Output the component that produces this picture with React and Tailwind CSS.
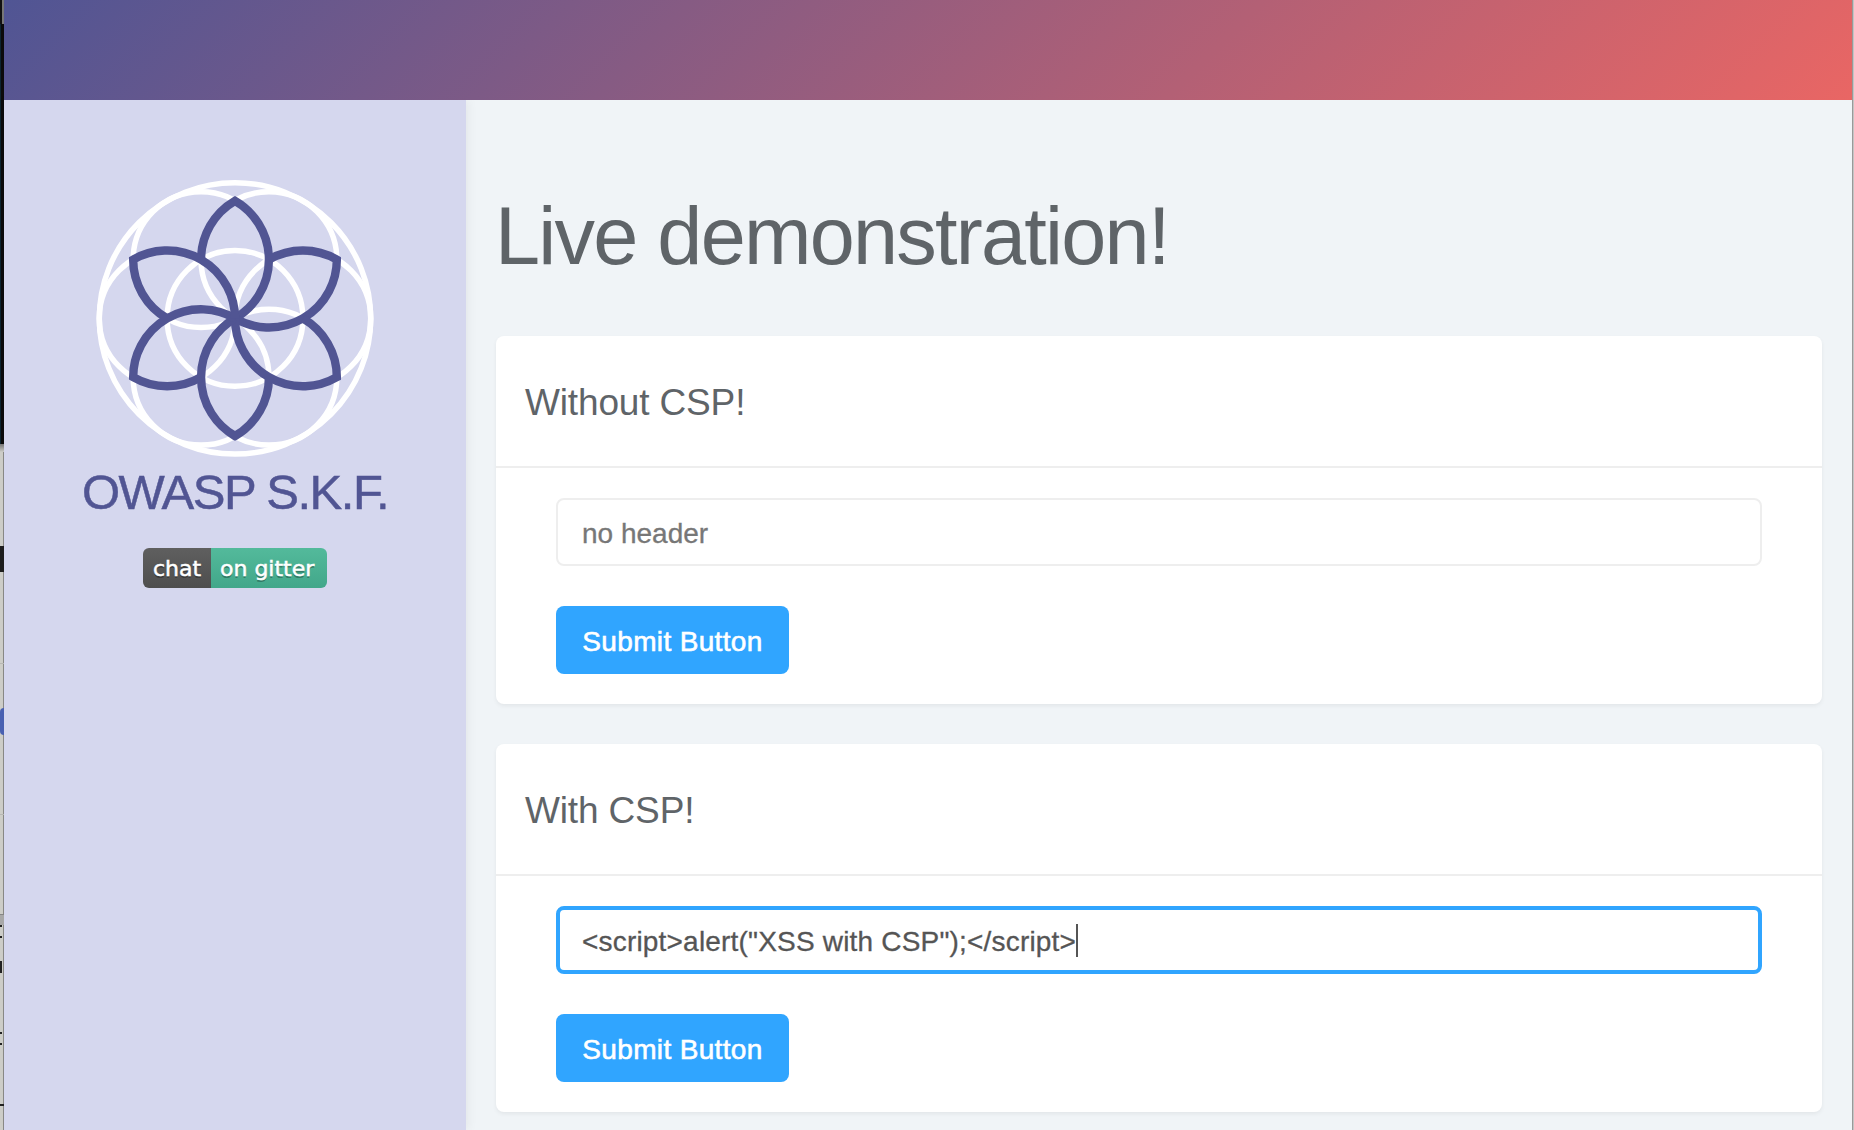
const PETAL_ANGLES = [0, 60, 120, 180, 240, 300];
const RING_CENTERS = [
  [0, 0],
  [67.9, 0],
  [-67.9, 0],
  [33.95, -58.8],
  [-33.95, -58.8],
  [33.95, 58.8],
  [-33.95, 58.8],
];

function Logo() {
  return (
    <svg className="h-[280px] w-[280px]" viewBox="-140 -140.4 280 280" fill="none">
      <g stroke="#fff" strokeWidth="5.5">
        <circle r="135.7" />
        {RING_CENTERS.map(([x, y]) => (
          <circle key={`${x},${y}`} cx={x} cy={y} r="67.9" />
        ))}
      </g>
      <g stroke="#515593" strokeWidth="8.4" strokeMiterlimit="10">
        {PETAL_ANGLES.map((angle) => (
          <path
            key={angle}
            transform={`rotate(${angle})`}
            d="M-33.95 -58.8 A67.9 67.9 0 0 1 0 -117.6 A67.9 67.9 0 0 1 0 0"
          />
        ))}
      </g>
    </svg>
  );
}

function GitterBadge() {
  return (
    <div className="flex h-10 w-[184px] overflow-hidden rounded-md font-['DejaVu_Sans',Verdana,sans-serif] text-[22px] leading-[41px] text-white [-webkit-text-stroke:0.5px_white] [text-shadow:0_2px_0_rgba(1,1,1,0.3)]">
      <span className="flex w-[68px] justify-center bg-linear-to-b from-[#5f5f5f] to-[#4e4e4e]">chat</span>
      <span className="flex flex-1 bg-linear-to-b from-[#53ba9b] to-[#42a78a] pl-[9px]">on gitter</span>
    </div>
  );
}

function DesktopEdge() {
  return (
    <div className="flex w-1 shrink-0 flex-col bg-[linear-gradient(90deg,#cfcfca_75%,#8b8b88_75%)]">
      <div className="h-6 border-l-2 border-[#111] bg-[#777]" />
      <div className="h-[420px] border-l border-[#0d2430] bg-[#0b0b0b]" />
      <div className="h-2 bg-linear-to-b from-[#777] to-[#cfcfca]" />
      <div className="h-[94px]" />
      <div className="h-[26px] bg-[#1e1e1e]" />
      <div className="h-[92px] border-b border-[#b9b9b5]" />
      <div className="h-[44px]" />
      <div className="h-[27px] rounded-l-full bg-[#4a62b4]" />
      <div className="h-[80px] border-b border-[#b9b9b5]" />
      <div className="h-[100px] border-b border-[#888]" />
      <div className="h-[10px] bg-[#aaa]" />
      <div className="h-[2px] w-0.5 bg-[#222]" />
      <div className="h-[9px]" />
      <div className="h-[2px] w-0.5 bg-[#222]" />
      <div className="h-[23px]" />
      <div className="h-[12px] w-0.5 bg-[#222]" />
      <div className="h-[59px]" />
      <div className="h-[2px] w-0.5 bg-[#222]" />
      <div className="h-[9px]" />
      <div className="h-[2px] w-0.5 bg-[#222]" />
      <div className="h-[59px]" />
      <div className="h-[2px] bg-[#222]" />
    </div>
  );
}

function DemoCard({ title, children }) {
  return (
    <section className="h-[368px] rounded-lg bg-white shadow-[0_2px_4px_rgba(0,0,0,0.06)]">
      <header className="h-[132px] border-b-2 border-[#eee] px-[29px] pt-[46px]">
        <h2 className="text-[37px] leading-[42px] font-normal tracking-[-0.15px] text-[#5f6468]">{title}</h2>
      </header>
      <div className="flex flex-col items-start gap-10 px-[60px] pt-[30px]">
        {children}
        <button className="h-[68px] w-[233px] rounded-lg bg-[#30a5ff] pt-1 text-[28px] tracking-[0.35px] text-white [-webkit-text-stroke:0.6px_white]">
          Submit Button
        </button>
      </div>
    </section>
  );
}

export default function App() {
  return (
    <div className="flex h-[1130px] w-[1854px] overflow-hidden font-['Liberation_Sans',Arial,sans-serif]">
      <DesktopEdge />
      <div className="flex min-w-0 flex-1 flex-col">
        <div className="relative z-10 h-[100px] shrink-0 bg-[linear-gradient(135deg,#505594,#e96664)]" />
        <div className="flex flex-1">
          <aside className="relative flex w-[462px] shrink-0 flex-col items-center bg-[#d5d7ee] pt-[78px] shadow-[2px_0_10px_rgba(0,0,0,0.06)]">
            <Logo />
            <div className="mt-1.5 h-[56px] text-[49px] leading-[56px] tracking-[-1.5px] whitespace-nowrap text-[#515593] [-webkit-text-stroke:0.5px_#515593]">
              OWASP S.K.F.
            </div>
            <div className="mt-[28px]">
              <GitterBadge />
            </div>
          </aside>
          <main className="flex flex-1 flex-col gap-10 bg-[#f0f4f7] px-[30px]">
            <h1 className="-ml-px h-[196px] pt-[88px] text-[81px] leading-[96px] font-normal tracking-[-1.75px] whitespace-nowrap text-[#5f6468]">
              Live demonstration!
            </h1>
            <DemoCard title="Without CSP!">
              <div className="flex h-[68px] w-full items-center rounded-lg border-2 border-[#eee] px-6 pt-1 text-[28px] text-[#777] [-webkit-text-stroke:0.3px_#777]">
                no header
              </div>
            </DemoCard>
            <DemoCard title="With CSP!">
              <div className="flex h-[68px] w-full items-center rounded-lg border-4 border-[#30a5ff] px-[22px] text-[28px] text-[#555]">
                <span className="pt-1 tracking-[0.19px] [-webkit-text-stroke:0.3px_#555]">
                  {'<script>alert("XSS with CSP");</script>'}
                </span>
                <span className="h-[33px] w-0.5 bg-[#555]" />
              </div>
            </DemoCard>
          </main>
        </div>
      </div>
      <div className="w-0.5 shrink-0 border-l border-[#999] bg-[#c4c4c4]" />
    </div>
  );
}
